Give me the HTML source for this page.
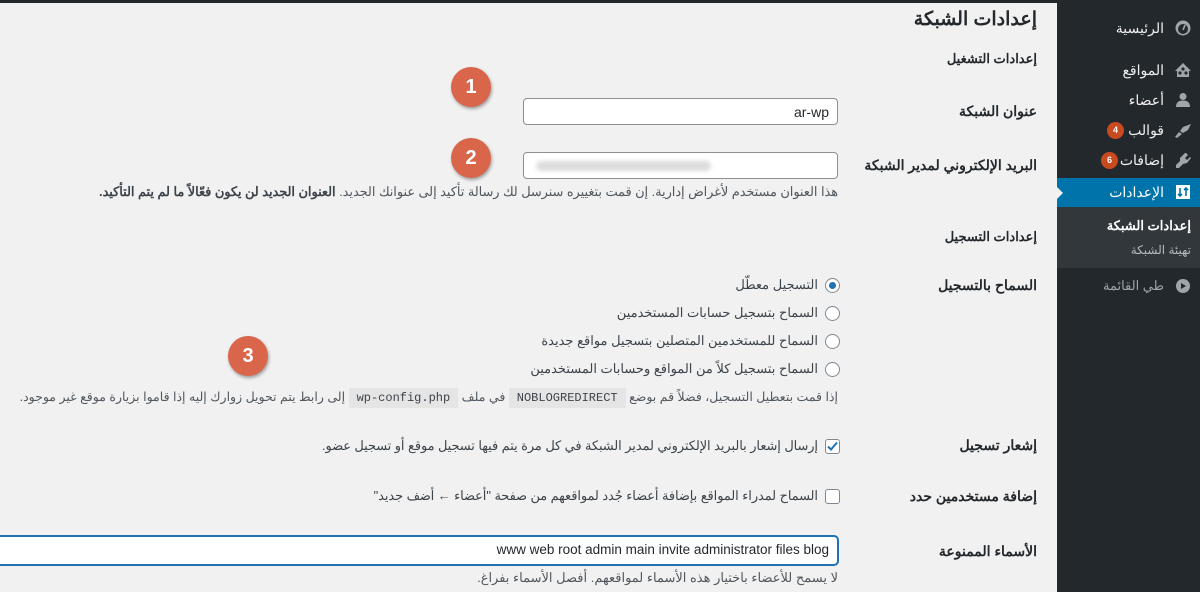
<!DOCTYPE html>
<html dir="rtl"><head><meta charset="utf-8">
<style>
*{box-sizing:border-box;margin:0;padding:0}
body{width:1200px;height:592px;overflow:hidden;background:#f1f1f1;font-family:"Liberation Sans","Noto Sans CJK SC",sans-serif;color:#23282d;font-size:13px;position:relative}
.a{position:absolute;white-space:nowrap}
#top{position:absolute;left:0;top:0;width:1200px;height:3px;background:#23282d}
#side{position:absolute;left:1057px;top:0;width:143px;height:592px;background:#23282d}
.mi{position:absolute;right:0;width:143px;height:28px;color:#eee;font-size:14px}
.mi span.t{position:absolute;right:36px;top:6px}
.ic{position:absolute;right:9px;top:6px;width:16px;height:16px}
.badge{position:absolute;top:6px;width:17px;height:17px;border-radius:50%;background:#ca4a1f;color:#fff;font-size:9px;font-weight:bold;text-align:center;line-height:17px}
h1{position:absolute;right:163px;top:8px;font-size:19px;font-weight:bold;color:#23282d}
.lbl{position:absolute;right:163px;font-size:14px;font-weight:bold;color:#23282d}
.inp{position:absolute;background:#fff;border:1px solid #8c8f94;border-radius:4px;height:27px}
.num{position:absolute;width:40px;height:40px;border-radius:50%;background:#d9654a;color:#fff;font-weight:bold;font-size:20px;text-align:center;line-height:40px;box-shadow:1px 2px 3px rgba(0,0,0,.35)}
.rad{position:absolute;left:825px;width:15px;height:15px;border:1px solid #7e8993;border-radius:50%;background:#fff}
.opt{position:absolute;right:382px;font-size:13px;color:#3c434a}
.desc{position:absolute;right:362px;font-size:13px;color:#50575e}
code{background:#e5e5e5;font-family:"Liberation Mono",monospace;font-size:12px;padding:3px 8px;color:#3c434a}
.cb{position:absolute;left:825px;width:15px;height:15px;border:1px solid #7e8993;border-radius:3px;background:#fff}
</style></head><body>
<div id="top"></div>
<div id="side">
 <div class="mi" style="top:14px"><svg class="ic" viewBox="0 0 16 16"><circle cx="8" cy="8" r="7.5" fill="#a0a5aa"/><circle cx="8" cy="9" r="5" fill="#23282d"/><path d="M8 10 L10 5" stroke="#a0a5aa" stroke-width="1.6"/></svg><span class="t">الرئيسية</span></div>
 <div class="mi" style="top:56px"><svg class="ic" viewBox="0 0 16 16"><path d="M0 9 L8 1 L16 9 L14 9 L14 15 L2 15 L2 9Z" fill="#a0a5aa"/><circle cx="5" cy="11" r="1.6" fill="#23282d"/><circle cx="11" cy="11" r="1.6" fill="#23282d"/><circle cx="8" cy="7" r="1.6" fill="#23282d"/></svg><span class="t">المواقع</span></div>
 <div class="mi" style="top:86px"><svg class="ic" viewBox="0 0 16 16"><circle cx="8" cy="4.5" r="3.5" fill="#a0a5aa"/><path d="M1 15 Q1 8.5 8 8.5 Q15 8.5 15 15Z" fill="#a0a5aa"/></svg><span class="t">أعضاء</span></div>
 <div class="mi" style="top:116px"><svg class="ic" viewBox="0 0 16 16"><path d="M16 2 L8 5 L5 9 L8 11 L13 8Z M4 10 L7 12 L2 16 L0 15Z" fill="#a0a5aa"/></svg><span class="t">قوالب</span><span class="badge" style="right:76px">4</span></div>
 <div class="mi" style="top:146px"><svg class="ic" viewBox="0 0 16 16"><path d="M11 1 L13 3 L10 6 L12 8 L15 5 L16 6 L12 11 L8 12 L4 16 L1 16 L1 13 L5 9 L5 6 L10 1Z" fill="#a0a5aa"/></svg><span class="t">إضافات</span><span class="badge" style="right:82px">6</span></div>
 <div class="mi" style="top:178px;height:29px;background:#0073aa;color:#fff"><svg class="ic" viewBox="0 0 16 16"><rect x="1" y="1" width="14" height="14" fill="#fff"/><path d="M5 4 V12 M3 10 L5 12 L7 10 M11 12 V4 M9 6 L11 4 L13 6" stroke="#0073aa" stroke-width="1.6" fill="none"/></svg><span class="t">الإعدادات</span></div>
 <div style="position:absolute;left:-1px;top:186px;width:0;height:0;border-top:7px solid transparent;border-bottom:7px solid transparent;border-left:7px solid #f1f1f1"></div>
 <div style="position:absolute;right:0;top:207px;width:143px;height:61px;background:#32373c">
  <div class="a" style="right:9px;top:11px;color:#fff;font-weight:bold;font-size:13px">إعدادات الشبكة</div>
  <div class="a" style="right:9px;top:36px;color:#b4b9be;font-size:12px">تهيئة الشبكة</div>
 </div>
 <div class="mi" style="top:272px;color:#a0a5aa;font-size:13px"><svg class="ic" viewBox="0 0 16 16"><circle cx="8" cy="8" r="7" fill="#a0a5aa"/><path d="M6 5 L11 8 L6 11Z" fill="#23282d"/></svg><span class="t">طي القائمة</span></div>
</div>

<h1>إعدادات الشبكة</h1>
<div class="lbl" style="top:51px;font-size:13px">إعدادات التشغيل</div>
<div class="lbl" style="top:103px">عنوان الشبكة</div>
<div class="inp" style="left:523px;top:98px;width:315px"><span class="a" style="right:8px;top:5px;font-size:14px">ar-wp</span></div>
<div class="num" style="left:451px;top:67px">1</div>
<div class="lbl" style="top:157px">البريد الإلكتروني لمدير الشبكة</div>
<div class="inp" style="left:523px;top:152px;width:315px"><div class="a" style="left:12px;top:8px;width:175px;height:10px;background:#dcdcdc;border-radius:5px;filter:blur(2px)"></div></div>
<div class="num" style="left:451px;top:138px">2</div>
<div class="desc" style="top:184px;right:362px;font-size:12.8px">هذا العنوان مستخدم لأغراض إدارية. إن قمت بتغييره سنرسل لك رسالة تأكيد إلى عنوانك الجديد. <b style="color:#3c434a">العنوان الجديد لن يكون فعّالاً ما لم يتم التأكيد.</b></div>

<div class="lbl" style="top:229px;font-size:13px">إعدادات التسجيل</div>
<div class="lbl" style="top:277px">السماح بالتسجيل</div>
<div class="rad" style="top:278px"><div style="position:absolute;left:3px;top:3px;width:7px;height:7px;border-radius:50%;background:#2271b1"></div></div>
<div class="rad" style="top:306px"></div>
<div class="rad" style="top:334px"></div>
<div class="rad" style="top:362px"></div>
<div class="opt" style="top:277px">التسجيل معطّل</div>
<div class="opt" style="top:305px">السماح بتسجيل حسابات المستخدمين</div>
<div class="opt" style="top:333px">السماح للمستخدمين المتصلين بتسجيل مواقع جديدة</div>
<div class="opt" style="top:361px">السماح بتسجيل كلاً من المواقع وحسابات المستخدمين</div>
<div class="num" style="left:228px;top:336px">3</div>
<div class="desc" style="top:389px;font-size:12.5px">إذا قمت بتعطيل التسجيل، فضلاً قم بوضع <code>NOBLOGREDIRECT</code> في ملف <code>wp-config.php</code> إلى رابط يتم تحويل زوارك إليه إذا قاموا بزيارة موقع غير موجود.</div>

<div class="lbl" style="top:437px">إشعار تسجيل</div>
<div class="cb" style="top:439px"><svg width="13" height="13" viewBox="0 0 13 13" style="position:absolute;left:0;top:0"><path d="M2 6.5 L5 9.5 L11 2.5" stroke="#2271b1" stroke-width="2" fill="none"/></svg></div>
<div class="opt" style="top:438px;font-size:12.8px">إرسال إشعار بالبريد الإلكتروني لمدير الشبكة في كل مرة يتم فيها تسجيل موقع أو تسجيل عضو.</div>

<div class="lbl" style="top:488px">إضافة مستخدمين حدد</div>
<div class="cb" style="top:489px"></div>
<div class="opt" style="top:488px;font-size:12.8px">السماح لمدراء المواقع بإضافة أعضاء جُدد لمواقعهم من صفحة "أعضاء ← أضف جديد"</div>

<div class="lbl" style="top:543px">الأسماء الممنوعة</div>
<div class="inp" style="left:-5px;top:536px;width:843px;height:29px;border:1px solid #2271b1;box-shadow:0 0 0 1px #2271b1"><span class="a" style="right:8px;top:5px;font-size:13.5px;color:#23282d">www web root admin main invite administrator files blog</span></div>
<div class="desc" style="top:570px">لا يسمح للأعضاء باختيار هذه الأسماء لمواقعهم. أفصل الأسماء بفراغ.</div>
</body></html>
